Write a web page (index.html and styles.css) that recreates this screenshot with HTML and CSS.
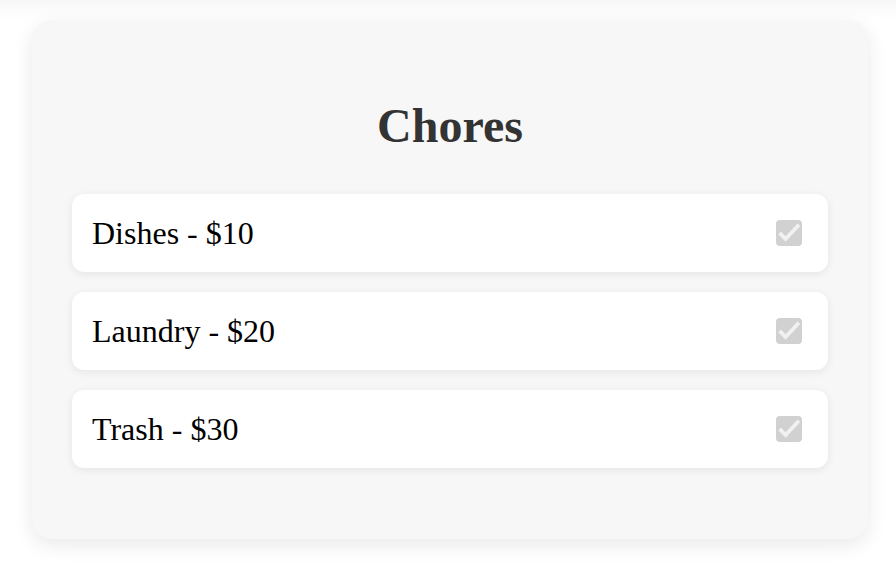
FILE: index.html
```html
<!DOCTYPE html>
<html lang="en">
<head>
<meta charset="utf-8">
<title>Chores</title>
<link rel="stylesheet" href="styles.css">
</head>
<body>
<main class="card">
  <h1 class="title">Chores</h1>
  <ul class="chore-list">
    <li class="chore">
      <span class="chore-label">Dishes - $10</span>
      <span class="check" role="checkbox" aria-checked="true" aria-disabled="true">
        <svg viewBox="0 0 26 26" width="26" height="26"><path d="M5 14.2 L9.6 19 L21.6 6.2" fill="none" stroke="#f1f1f1" stroke-width="3.8" stroke-linecap="square" stroke-linejoin="miter"/></svg>
      </span>
    </li>
    <li class="chore">
      <span class="chore-label">Laundry - $20</span>
      <span class="check" role="checkbox" aria-checked="true" aria-disabled="true">
        <svg viewBox="0 0 26 26" width="26" height="26"><path d="M5 14.2 L9.6 19 L21.6 6.2" fill="none" stroke="#f1f1f1" stroke-width="3.8" stroke-linecap="square" stroke-linejoin="miter"/></svg>
      </span>
    </li>
    <li class="chore">
      <span class="chore-label">Trash - $30</span>
      <span class="check" role="checkbox" aria-checked="true" aria-disabled="true">
        <svg viewBox="0 0 26 26" width="26" height="26"><path d="M5 14.2 L9.6 19 L21.6 6.2" fill="none" stroke="#f1f1f1" stroke-width="3.8" stroke-linecap="square" stroke-linejoin="miter"/></svg>
      </span>
    </li>
  </ul>
</main>
</body>
</html>
```

FILE: styles.css
```css
html, body {
  margin: 0;
  padding: 0;
}

body {
  background: linear-gradient(to bottom, #f6f6f6 0, #fcfcfc 10px, #ffffff 20px);
  font-family: "Liberation Serif", "Times New Roman", serif;
  color: #000;
  min-height: 568px;
  box-sizing: border-box;
  padding: 20px 28px 20px 32px;
}

.card {
  background: #f7f7f7;
  border-radius: 20px;
  box-shadow: 0 6px 20px rgba(0, 0, 0, 0.09);
  padding: 40px 40px 71px;
  display: flex;
  flex-direction: column;
}

.title {
  margin: 38px 0 41px;
  font-size: 48px;
  font-weight: bold;
  color: #333;
  text-align: center;
}

.chore-list {
  list-style: none;
  margin: 0;
  padding: 0;
  display: flex;
  flex-direction: column;
  gap: 20px;
}

.chore {
  background: #fff;
  border-radius: 12px;
  box-shadow: 0 2px 8px rgba(0, 0, 0, 0.08);
  padding: 20px 26px 20px 20px;
  display: flex;
  align-items: center;
  justify-content: space-between;
  font-size: 32px;
  line-height: 38px;
}

.check {
  width: 26px;
  height: 26px;
  border-radius: 4px;
  background: #d1d1d1;
  display: flex;
}

.check svg {
  display: block;
}
```
